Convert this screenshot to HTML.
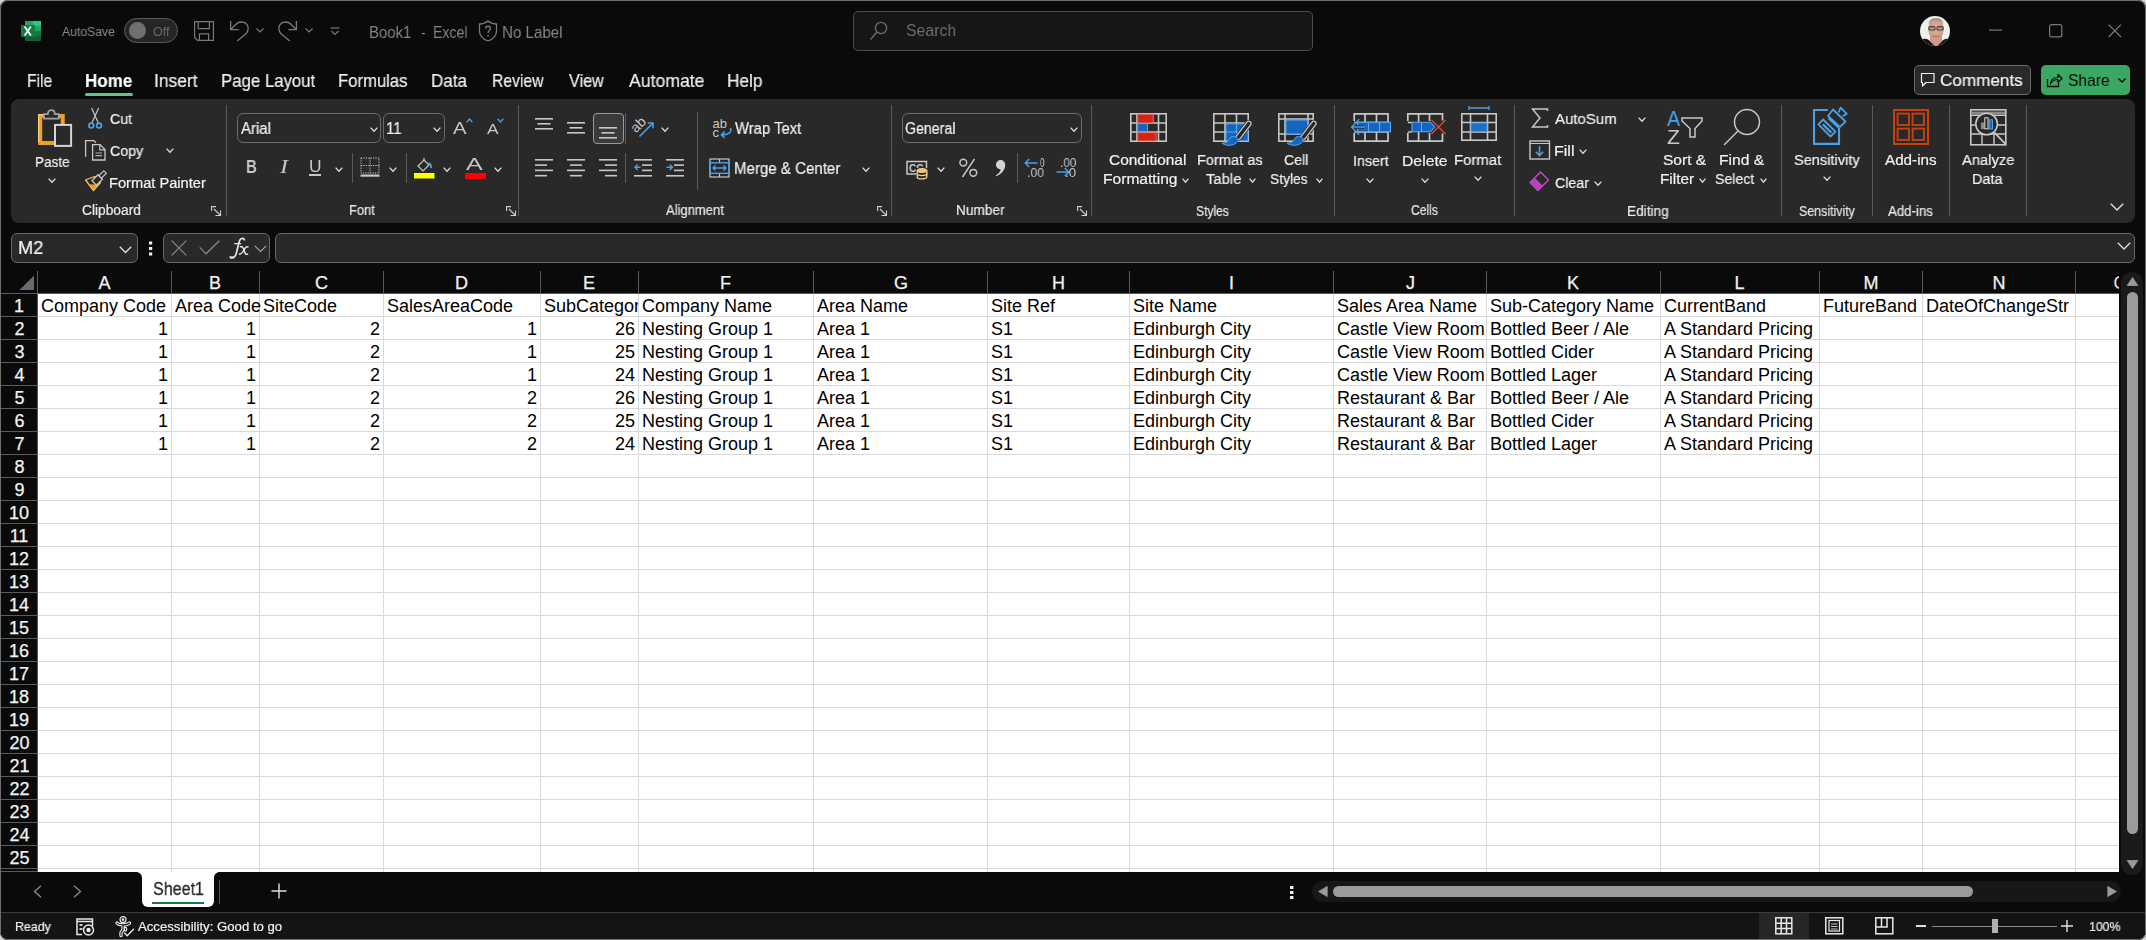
<!DOCTYPE html>
<html><head><meta charset="utf-8"><title>Book1 - Excel</title>
<style>
html,body{margin:0;padding:0;width:2146px;height:940px;overflow:hidden;background:#d6d6d6;}
.a{position:absolute;}
.t{position:absolute;line-height:1;white-space:pre;transform-origin:0 0;font-family:'Liberation Sans',sans-serif;}
svg.a{overflow:visible;}
.u{will-change:transform;}
</style></head><body>
<div class="a" style="left:0px;top:0px;width:2146px;height:940px;background:#0a0a0a;border-radius:8px;box-shadow:inset 0 0 0 1px #6f6f6f;"></div>
<svg class="a" style="left:21px;top:21px;" width="20" height="20" viewBox="0 0 20 20" fill="none">
<rect x="4" y="0" width="16" height="20" rx="1" fill="#185c37"/>
<rect x="4" y="0" width="16" height="5" fill="#21a366"/>
<rect x="12" y="0" width="8" height="5" fill="#33c481"/>
<rect x="4" y="5" width="16" height="5" fill="#21a366"/>
<rect x="4" y="10" width="16" height="5" fill="#107c41"/>
<rect x="0" y="4" width="14" height="12" rx="1" fill="#107c41"/>
<path d="M3.6 5.4 L9.9 14.6 M9.9 5.4 L3.6 14.6" stroke="#fff" stroke-width="1.7"/>
</svg>
<svg class="a" style="left:124px;top:18px;" width="54" height="25" viewBox="0 0 54 25" fill="none"><rect x="0.5" y="0.5" width="53" height="24" rx="12" fill="#262626" stroke="#5a5a5a"/><circle cx="13.5" cy="12.5" r="8.5" fill="#707070"/></svg>
<svg class="a" style="left:194px;top:21px;" width="20" height="20" viewBox="0 0 20 20" fill="none"><path d="M0.6 0.6 H19.4 V19.4 H3.6 L0.6 16.4 Z" stroke="#7a7a7a" stroke-width="1.2"/><path d="M4.2 0.6 V7.6 H15.4 V0.6" stroke="#7a7a7a" stroke-width="1.2"/><path d="M5.4 19.4 V12.8 H14.6 V19.4" stroke="#7a7a7a" stroke-width="1.2"/></svg>
<svg class="a" style="left:228px;top:20px;" width="22" height="22" viewBox="0 0 22 22" fill="none"><path d="M2.6 1 V9.6 H10.6" stroke="#7a7a7a" stroke-width="1.3" fill="none"/><path d="M3 9.2 L8 4.2 C11 1.2, 16.5 1.2, 19 4.6 C21 7.5, 20.3 11.5, 18 13.8 L9.2 21" stroke="#7a7a7a" stroke-width="1.3" fill="none"/></svg>
<svg class="a" style="left:256px;top:28px;" width="8" height="5" viewBox="0 0 8 5" fill="none"><path d="M0.5 0.5 L4 4 L7.5 0.5" stroke="#7a7a7a" stroke-width="1.2"/></svg>
<svg class="a" style="left:277px;top:20px;" width="22" height="22" viewBox="0 0 22 22" fill="none"><path d="M19.4 1 V9.6 H11.4" stroke="#7a7a7a" stroke-width="1.3" fill="none"/><path d="M19 9.2 L14 4.2 C11 1.2, 5.5 1.2, 3 4.6 C1 7.5, 1.7 11.5, 4 13.8 L12.8 21" stroke="#7a7a7a" stroke-width="1.3" fill="none"/></svg>
<svg class="a" style="left:305px;top:28px;" width="8" height="5" viewBox="0 0 8 5" fill="none"><path d="M0.5 0.5 L4 4 L7.5 0.5" stroke="#7a7a7a" stroke-width="1.2"/></svg>
<svg class="a" style="left:330px;top:27px;" width="10" height="10" viewBox="0 0 10 10" fill="none"><path d="M0.5 1 H9.5" stroke="#7a7a7a" stroke-width="1.2"/><path d="M1.5 4 L5 7.5 L8.5 4" stroke="#7a7a7a" stroke-width="1.2"/></svg>
<svg class="a" style="left:478px;top:20px;" width="20" height="22" viewBox="0 0 20 22" fill="none"><path d="M10 1 C13 3.5, 16 4, 18.5 4 V11 C18.5 16, 14 19.5, 10 21 C6 19.5, 1.5 16, 1.5 11 V4 C4 4, 7 3.5, 10 1 Z" stroke="#7a7a7a" stroke-width="1.3"/><path d="M7.5 8.5 C7.5 5.5, 12.5 5.5, 12.5 8.5 C12.5 10.5, 10 10.5, 10 13" stroke="#7a7a7a" stroke-width="1.3"/><circle cx="10" cy="15.8" r="0.9" fill="#7a7a7a"/></svg>
<div class="a" style="left:853px;top:11px;width:460px;height:40px;box-sizing:border-box;background:#161616;border:1px solid #4b4b4b;border-radius:5px;"></div>
<svg class="a" style="left:869px;top:21px;" width="20" height="20" viewBox="0 0 20 20" fill="none"><circle cx="12" cy="7" r="5.6" stroke="#6e6e6e" stroke-width="1.3"/><path d="M8 11 L1.5 18.5" stroke="#6e6e6e" stroke-width="1.3"/></svg>
<svg class="a" style="left:1920px;top:16px;" width="30" height="30" viewBox="0 0 30 30" fill="none"><defs><clipPath id="av"><circle cx="15" cy="15" r="15"/></clipPath><radialGradient id="fg" cx="0.5" cy="0.45" r="0.6"><stop offset="0" stop-color="#e2b09a"/><stop offset="1" stop-color="#c99682"/></radialGradient></defs>
<g clip-path="url(#av)"><rect width="30" height="30" fill="#eef1ea"/>
<path d="M10 18 H22 V30 H10 Z" fill="#cf9a86"/><ellipse cx="16" cy="13.5" rx="7.6" ry="10.5" fill="url(#fg)"/>
<path d="M8.6 9.5 C8.5 3.5, 12 2, 16 2 C20 2, 23.5 3.5, 23.4 9.5 C22 5.5, 19 4.6, 16 4.6 C13 4.6, 10 5.5, 8.6 9.5Z" fill="#a89a90"/>
<rect x="8.8" y="10.6" width="6.2" height="3.4" rx="1" stroke="#4a4040" stroke-width="1.1" fill="#8a7a78" fill-opacity="0.35"/><rect x="17" y="10.6" width="6.2" height="3.4" rx="1" stroke="#4a4040" stroke-width="1.1" fill="#8a7a78" fill-opacity="0.35"/>
<path d="M12.5 19.5 C14.5 20.8, 17.5 20.8, 19.5 19.5" stroke="#b86a6a" stroke-width="1.2"/>
<path d="M0 24 C4 22, 8 22, 10.5 26 L16 31 L21.5 26 C24 22, 28 22, 32 24 V32 H0 Z" fill="#141414"/></g></svg>
<svg class="a" style="left:1989px;top:29px;" width="13" height="2" viewBox="0 0 13 2" fill="none"><rect x="0" y="0.5" width="13" height="1.2" fill="#7a7a7a"/></svg>
<svg class="a" style="left:2049px;top:24px;" width="14" height="14" viewBox="0 0 14 14" fill="none"><rect x="0.6" y="0.6" width="12.2" height="12.2" rx="2" stroke="#7a7a7a" stroke-width="1.2"/></svg>
<svg class="a" style="left:2108px;top:24px;" width="14" height="14" viewBox="0 0 14 14" fill="none"><path d="M0.6 0.6 L13 13 M13 0.6 L0.6 13" stroke="#7a7a7a" stroke-width="1.2"/></svg>
<div class="a" style="left:85px;top:93px;width:48px;height:3px;background:#5fc38a;border-radius:2px;"></div>
<div class="a" style="left:1914px;top:65px;width:117px;height:30px;box-sizing:border-box;background:#292929;border:1px solid #6a6a6a;border-radius:5px;"></div>
<svg class="a" style="left:1920px;top:72px;" width="16" height="16" viewBox="0 0 16 16" fill="none"><path d="M1.5 1.5 H14 V10.5 H6 L2.5 14 V10.5 H1.5 Z" stroke="#f0f0f0" stroke-width="1.2" stroke-linejoin="round"/></svg>
<div class="a" style="left:2041px;top:65px;width:89px;height:30px;background:#3aa862;border-radius:5px;"></div>
<svg class="a" style="left:2046px;top:72px;" width="17" height="16" viewBox="0 0 17 16" fill="none"><path d="M1.5 7 V14.5 H12.5 V11" stroke="#0a0a0a" stroke-width="1.3"/><path d="M4.5 12 C5 7, 8 5.5, 12 5.5 V2.5 L16 6.5 L12 10.5 V7.5 C9 7.5, 6.5 8.5, 4.5 12Z" stroke="#0a0a0a" stroke-width="1.2" stroke-linejoin="round"/></svg>
<svg class="a" style="left:2118px;top:78px;" width="8" height="5" viewBox="0 0 8 5" fill="none"><path d="M0.5 0.5 L4 4 L7.5 0.5" stroke="#0a0a0a" stroke-width="1.3"/></svg>
<div class="a" style="left:11px;top:99px;width:2124px;height:124px;background:#292929;border-radius:8px;"></div>
<div class="a" style="left:226px;top:105px;width:1px;height:111px;background:#5a5a5a;"></div>
<div class="a" style="left:518px;top:105px;width:1px;height:111px;background:#5a5a5a;"></div>
<div class="a" style="left:891px;top:105px;width:1px;height:111px;background:#5a5a5a;"></div>
<div class="a" style="left:1091px;top:105px;width:1px;height:111px;background:#5a5a5a;"></div>
<div class="a" style="left:1334px;top:105px;width:1px;height:111px;background:#5a5a5a;"></div>
<div class="a" style="left:1514px;top:105px;width:1px;height:111px;background:#5a5a5a;"></div>
<div class="a" style="left:1781px;top:105px;width:1px;height:111px;background:#5a5a5a;"></div>
<div class="a" style="left:1872px;top:105px;width:1px;height:111px;background:#5a5a5a;"></div>
<div class="a" style="left:1949px;top:105px;width:1px;height:111px;background:#5a5a5a;"></div>
<div class="a" style="left:2026px;top:105px;width:1px;height:111px;background:#5a5a5a;"></div>
<svg class="a" style="left:37px;top:108px;" width="37" height="40" viewBox="0 0 37 40" fill="none">
<path d="M8 8 H3.2 V34.9 H17.5" stroke="#f0a024" stroke-width="4" fill="none"/>
<path d="M20 8 H25.7 V16" stroke="#f0a024" stroke-width="4" fill="none"/>
<path d="M1.6 34 V6.6 H7" stroke="#f6d283" stroke-width="1.2" fill="none"/>
<path d="M6.9 6.1 H10.8 C10.8 0.9, 17.8 0.9, 17.8 6.1 H21.7 V10.7 H6.9 Z" stroke="#a2a2a2" stroke-width="1.8" fill="#292929"/>
<rect x="18" y="16.9" width="16.1" height="21" stroke="#d4d4d4" stroke-width="2" fill="#292929"/>
</svg>
<svg class="a" style="left:48px;top:178px;" width="8" height="5" viewBox="0 0 8 5" fill="none"><path d="M0.6 0.6 L4.0 4.2 L7.4 0.6" stroke="#e0e0e0" stroke-width="1.3" fill="none"/></svg>
<svg class="a" style="left:86px;top:106px;" width="18" height="24" viewBox="0 0 18 24" fill="none"><path d="M5.6 2 L12.2 16.8 M12.6 2 L6 16.8" stroke="#c8c8c8" stroke-width="1.2"/>
<circle cx="5.3" cy="19.5" r="2.4" stroke="#4ba0e6" stroke-width="1.7"/><circle cx="13" cy="19.5" r="2.4" stroke="#4ba0e6" stroke-width="1.7"/></svg>
<svg class="a" style="left:84px;top:139px;" width="22" height="22" viewBox="0 0 22 22" fill="none"><path d="M1.6 17.8 V1.6 H9.8 L12 3.8" stroke="#c8c8c8" stroke-width="1.3" fill="none"/>
<path d="M8.6 5.6 H16 L21 10.6 V21 H8.6 Z" stroke="#c8c8c8" stroke-width="1.3" fill="#292929"/><path d="M15.8 5.6 V10.8 H21" stroke="#c8c8c8" stroke-width="1.2" fill="none"/><path d="M11.5 14 H18 M11.5 16.6 H18" stroke="#b0b0b0" stroke-width="1.2"/></svg>
<svg class="a" style="left:166px;top:148px;" width="8" height="5" viewBox="0 0 8 5" fill="none"><path d="M0.6 0.6 L4.0 4.2 L7.4 0.6" stroke="#e0e0e0" stroke-width="1.3" fill="none"/></svg>
<svg class="a" style="left:84px;top:170px;" width="22" height="22" viewBox="0 0 22 22" fill="none"><path d="M1.6 10 L10.5 6.5 L16.5 12.5 L9.5 20.5 Z" stroke="#f2c65a" stroke-width="1.3" stroke-linejoin="round" fill="none"/>
<path d="M5.5 14.2 L14 14.8 L9.5 19.8 Z" fill="#f0a024"/>
<g transform="rotate(-45 14 9)"><rect x="8.5" y="6" width="8.5" height="6.2" stroke="#c8c8c8" stroke-width="1.3" fill="#292929"/><rect x="17" y="7.3" width="7" height="3.6" stroke="#c8c8c8" stroke-width="1.2" fill="#292929"/></g></svg>
<svg class="a" style="left:211px;top:206px;" width="11" height="11" viewBox="0 0 11 11" fill="none"><path d="M0.6 5 V0.6 H5" stroke="#d0d0d0" stroke-width="1.1"/><path d="M3 3 L9.5 9.5 M9.5 4.5 V9.5 H4.5" stroke="#d0d0d0" stroke-width="1.1"/></svg>
<div class="a" style="left:237px;top:113px;width:144px;height:30px;box-sizing:border-box;border:1px solid #6a6a6a;border-radius:6px;"></div>
<svg class="a" style="left:370px;top:127px;" width="8" height="5" viewBox="0 0 8 5" fill="none"><path d="M0.6 0.6 L4.0 4.2 L7.4 0.6" stroke="#e0e0e0" stroke-width="1.3" fill="none"/></svg>
<div class="a" style="left:383px;top:113px;width:62px;height:30px;box-sizing:border-box;border:1px solid #6a6a6a;border-radius:6px;"></div>
<svg class="a" style="left:433px;top:127px;" width="8" height="5" viewBox="0 0 8 5" fill="none"><path d="M0.6 0.6 L4.0 4.2 L7.4 0.6" stroke="#e0e0e0" stroke-width="1.3" fill="none"/></svg>
<svg class="a" style="left:466px;top:118px;" width="7" height="5" viewBox="0 0 7 5" fill="none"><path d="M0.6 4.2 L3.5 1 L6.4 4.2" stroke="#4ba0e6" stroke-width="1.3"/></svg>
<svg class="a" style="left:497px;top:118px;" width="7" height="5" viewBox="0 0 7 5" fill="none"><path d="M0.6 0.8 L3.5 4 L6.4 0.8" stroke="#4ba0e6" stroke-width="1.3"/></svg>
<div class="a" style="left:309px;top:174px;width:12px;height:1.5px;background:#c8c8c8;"></div>
<svg class="a" style="left:335px;top:167px;" width="8" height="5" viewBox="0 0 8 5" fill="none"><path d="M0.6 0.6 L4.0 4.2 L7.4 0.6" stroke="#e0e0e0" stroke-width="1.3" fill="none"/></svg>
<div class="a" style="left:352px;top:153px;width:1px;height:30px;background:#5a5a5a;"></div>
<svg class="a" style="left:360px;top:157px;" width="20" height="21" viewBox="0 0 20 21" fill="none"><rect x="1" y="1" width="18" height="15" stroke="#c8c8c8" stroke-width="1" stroke-dasharray="1.2 1.2"/>
<path d="M10 1 V16 M1 8.5 H19" stroke="#c8c8c8" stroke-width="1" stroke-dasharray="1.2 1.2"/><rect x="0.5" y="17.5" width="19" height="2.2" fill="#c8c8c8"/></svg>
<svg class="a" style="left:389px;top:167px;" width="8" height="5" viewBox="0 0 8 5" fill="none"><path d="M0.6 0.6 L4.0 4.2 L7.4 0.6" stroke="#e0e0e0" stroke-width="1.3" fill="none"/></svg>
<div class="a" style="left:406px;top:153px;width:1px;height:30px;background:#5a5a5a;"></div>
<svg class="a" style="left:414px;top:157px;" width="21" height="22" viewBox="0 0 21 22" fill="none"><path d="M4 9 L10 3 L15 8 L9 14 Z" stroke="#c8c8c8" stroke-width="1.2"/><path d="M10 3 V0.8" stroke="#c8c8c8" stroke-width="1.2"/><path d="M14.5 6 C16.5 7, 17.5 9, 17 11" stroke="#4ba0e6" stroke-width="1.8"/>
<rect x="0" y="16" width="20.5" height="5.5" fill="#ffff00"/></svg>
<svg class="a" style="left:443px;top:167px;" width="8" height="5" viewBox="0 0 8 5" fill="none"><path d="M0.6 0.6 L4.0 4.2 L7.4 0.6" stroke="#e0e0e0" stroke-width="1.3" fill="none"/></svg>
<div class="a" style="left:465px;top:173px;width:20.5px;height:5.5px;background:#ff0000;"></div>
<svg class="a" style="left:494px;top:167px;" width="8" height="5" viewBox="0 0 8 5" fill="none"><path d="M0.6 0.6 L4.0 4.2 L7.4 0.6" stroke="#e0e0e0" stroke-width="1.3" fill="none"/></svg>
<svg class="a" style="left:506px;top:206px;" width="11" height="11" viewBox="0 0 11 11" fill="none"><path d="M0.6 5 V0.6 H5" stroke="#d0d0d0" stroke-width="1.1"/><path d="M3 3 L9.5 9.5 M9.5 4.5 V9.5 H4.5" stroke="#d0d0d0" stroke-width="1.1"/></svg>
<svg class="a" style="left:535px;top:118px;" width="20" height="17" viewBox="0 0 20 17" fill="none"><rect x="0" y="0" width="18" height="1.6" fill="#c8c8c8"/><rect x="2.5" y="5" width="13" height="1.6" fill="#c8c8c8"/><rect x="0" y="10" width="18" height="1.6" fill="#c8c8c8"/></svg>
<svg class="a" style="left:567px;top:121.5px;" width="20" height="17" viewBox="0 0 20 17" fill="none"><rect x="0" y="0" width="18" height="1.6" fill="#c8c8c8"/><rect x="2.5" y="5" width="13" height="1.6" fill="#c8c8c8"/><rect x="0" y="10" width="18" height="1.6" fill="#c8c8c8"/></svg>
<div class="a" style="left:593px;top:113px;width:31px;height:31px;box-sizing:border-box;background:#3a3a3a;border:1px solid #9a9a9a;border-radius:4px;"></div>
<svg class="a" style="left:599px;top:126.5px;" width="20" height="17" viewBox="0 0 20 17" fill="none"><rect x="0" y="0" width="18" height="1.6" fill="#c8c8c8"/><rect x="2.5" y="5" width="13" height="1.6" fill="#c8c8c8"/><rect x="0" y="10" width="18" height="1.6" fill="#c8c8c8"/></svg>
<div class="a" style="left:625px;top:113px;width:1px;height:31px;background:#5a5a5a;"></div>
<svg class="a" style="left:628px;top:110px;" width="30" height="30" viewBox="0 0 30 30" fill="none"><text x="8" y="23.5" transform="rotate(-45 8 23.5)" font-family="Liberation Sans" font-size="14" fill="#c8c8c8">ab</text>
<path d="M11.5 26.5 L25 13 M19.8 13 H25 V18.2" stroke="#4ba0e6" stroke-width="1.6"/></svg>
<svg class="a" style="left:661px;top:127px;" width="8" height="5" viewBox="0 0 8 5" fill="none"><path d="M0.6 0.6 L4.0 4.2 L7.4 0.6" stroke="#e0e0e0" stroke-width="1.3" fill="none"/></svg>
<svg class="a" style="left:535px;top:159px;" width="20" height="23.2" viewBox="0 0 20 23.2" fill="none"><rect x="0" y="0.0" width="18" height="1.6" fill="#c8c8c8"/><rect x="0" y="5.3" width="12" height="1.6" fill="#c8c8c8"/><rect x="0" y="10.6" width="18" height="1.6" fill="#c8c8c8"/><rect x="0" y="15.899999999999999" width="12" height="1.6" fill="#c8c8c8"/></svg>
<svg class="a" style="left:567px;top:159px;" width="20" height="23.2" viewBox="0 0 20 23.2" fill="none"><rect x="0" y="0.0" width="18" height="1.6" fill="#c8c8c8"/><rect x="3" y="5.3" width="12" height="1.6" fill="#c8c8c8"/><rect x="0" y="10.6" width="18" height="1.6" fill="#c8c8c8"/><rect x="3" y="15.899999999999999" width="12" height="1.6" fill="#c8c8c8"/></svg>
<svg class="a" style="left:599px;top:159px;" width="20" height="23.2" viewBox="0 0 20 23.2" fill="none"><rect x="0" y="0.0" width="18" height="1.6" fill="#c8c8c8"/><rect x="6" y="5.3" width="12" height="1.6" fill="#c8c8c8"/><rect x="0" y="10.6" width="18" height="1.6" fill="#c8c8c8"/><rect x="6" y="15.899999999999999" width="12" height="1.6" fill="#c8c8c8"/></svg>
<div class="a" style="left:625px;top:153px;width:1px;height:30px;background:#5a5a5a;"></div>
<svg class="a" style="left:634px;top:158px;" width="19" height="19" viewBox="0 0 19 19" fill="none"><rect x="0" y="1" width="18" height="1.6" fill="#c8c8c8"/><rect x="8" y="6.3" width="10" height="1.6" fill="#c8c8c8"/><rect x="8" y="11.6" width="10" height="1.6" fill="#c8c8c8"/><rect x="0" y="17" width="18" height="1.6" fill="#c8c8c8"/>
<path d="M6.5 9.2 H1 M3.8 6.5 L1 9.2 L3.8 12" stroke="#4ba0e6" stroke-width="1.4"/></svg>
<svg class="a" style="left:666px;top:158px;" width="19" height="19" viewBox="0 0 19 19" fill="none"><rect x="0" y="1" width="18" height="1.6" fill="#c8c8c8"/><rect x="8" y="6.3" width="10" height="1.6" fill="#c8c8c8"/><rect x="8" y="11.6" width="10" height="1.6" fill="#c8c8c8"/><rect x="0" y="17" width="18" height="1.6" fill="#c8c8c8"/>
<path d="M0.5 9.2 H6.5 M3.8 6.5 L6.5 9.2 L3.8 12" stroke="#4ba0e6" stroke-width="1.4"/></svg>
<div class="a" style="left:697px;top:112px;width:1px;height:78px;background:#5a5a5a;"></div>
<svg class="a" style="left:711px;top:116px;" width="24" height="24" viewBox="0 0 24 24" fill="none"><text x="1.5" y="12" font-family="Liberation Sans" font-size="13" fill="#c8c8c8">ab</text><text x="1.5" y="21" font-family="Liberation Sans" font-size="13" fill="#c8c8c8">c</text>
<path d="M19.5 12 C21 16.5, 17.5 18.8, 10.5 18.8 M13.6 15.6 L10.4 18.8 L13.6 22" stroke="#4ba0e6" stroke-width="1.6"/></svg>
<svg class="a" style="left:709px;top:158px;" width="21" height="20" viewBox="0 0 21 20" fill="none"><rect x="1" y="1" width="19" height="18" stroke="#c8c8c8" stroke-width="1.2"/><path d="M10.5 1 V4.5 M10.5 15.5 V19" stroke="#c8c8c8" stroke-width="1.2"/>
<rect x="1" y="4.8" width="19" height="10.5" stroke="#4ba0e6" stroke-width="1.4"/><path d="M4 10 H17 M6.5 7.5 L4 10 L6.5 12.5 M14.5 7.5 L17 10 L14.5 12.5" stroke="#4ba0e6" stroke-width="1.3"/></svg>
<svg class="a" style="left:862px;top:167px;" width="8" height="5" viewBox="0 0 8 5" fill="none"><path d="M0.6 0.6 L4.0 4.2 L7.4 0.6" stroke="#e0e0e0" stroke-width="1.3" fill="none"/></svg>
<svg class="a" style="left:877px;top:206px;" width="11" height="11" viewBox="0 0 11 11" fill="none"><path d="M0.6 5 V0.6 H5" stroke="#d0d0d0" stroke-width="1.1"/><path d="M3 3 L9.5 9.5 M9.5 4.5 V9.5 H4.5" stroke="#d0d0d0" stroke-width="1.1"/></svg>
<div class="a" style="left:902px;top:113px;width:180px;height:30px;box-sizing:border-box;border:1px solid #6a6a6a;border-radius:6px;"></div>
<svg class="a" style="left:1070px;top:127px;" width="8" height="5" viewBox="0 0 8 5" fill="none"><path d="M0.6 0.6 L4.0 4.2 L7.4 0.6" stroke="#e0e0e0" stroke-width="1.3" fill="none"/></svg>
<svg class="a" style="left:906px;top:160px;" width="23" height="20" viewBox="0 0 23 20" fill="none"><rect x="1" y="1.5" width="19.5" height="12.5" stroke="#c8c8c8" stroke-width="1.5"/><text x="3" y="11.5" font-family="Liberation Sans" font-size="10" font-weight="bold" fill="#c8c8c8">CC</text>
<rect x="10" y="8" width="11.5" height="11.5" fill="#292929"/>
<ellipse cx="16" cy="10.5" rx="4.8" ry="2" fill="#f2c46a" stroke="#f0d58a" stroke-width="1"/><path d="M11.2 10.5 V17 C11.2 19.6, 20.8 19.6, 20.8 17 V10.5" stroke="#f0d58a" stroke-width="1.3" fill="none"/><path d="M11.2 13.8 C11.2 16.2, 20.8 16.2, 20.8 13.8" stroke="#f0d58a" stroke-width="1.3"/></svg>
<svg class="a" style="left:937px;top:167px;" width="8" height="5" viewBox="0 0 8 5" fill="none"><path d="M0.6 0.6 L4.0 4.2 L7.4 0.6" stroke="#e0e0e0" stroke-width="1.3" fill="none"/></svg>
<svg class="a" style="left:959px;top:158px;" width="19" height="20" viewBox="0 0 19 20" fill="none"><circle cx="4.3" cy="4.6" r="3.4" stroke="#c8c8c8" stroke-width="1.5"/><circle cx="14.3" cy="14.8" r="3.4" stroke="#c8c8c8" stroke-width="1.5"/><path d="M15.5 0.8 L3.5 19" stroke="#c8c8c8" stroke-width="1.5"/></svg>
<svg class="a" style="left:995px;top:159px;" width="12" height="18" viewBox="0 0 12 18" fill="none"><path d="M5.6 1 A4.6 4.6 0 0 1 10.2 5.8 C10.2 11, 6.5 15.2, 1.4 17.2 L0.8 16.2 C3.8 14.4, 5.4 12.3, 5.7 10.4 A4.7 4.7 0 0 1 5.6 1 Z" fill="#d4d4d4"/></svg>
<div class="a" style="left:1017px;top:153px;width:1px;height:30px;background:#5a5a5a;"></div>
<svg class="a" style="left:1024px;top:158px;" width="14" height="10" viewBox="0 0 14 10" fill="none"><path d="M13.5 5 H1.5 M5.2 1 L1.2 5 L5.2 9" stroke="#4ba0e6" stroke-width="1.5"/></svg>
<svg class="a" style="left:1056px;top:167px;" width="14" height="10" viewBox="0 0 14 10" fill="none"><path d="M0.5 5 H12.5 M8.8 1 L12.8 5 L8.8 9" stroke="#4ba0e6" stroke-width="1.5"/></svg>
<svg class="a" style="left:1077px;top:206px;" width="11" height="11" viewBox="0 0 11 11" fill="none"><path d="M0.6 5 V0.6 H5" stroke="#d0d0d0" stroke-width="1.1"/><path d="M3 3 L9.5 9.5 M9.5 4.5 V9.5 H4.5" stroke="#d0d0d0" stroke-width="1.1"/></svg>
<svg class="a" style="left:1130px;top:113px;" width="37" height="29" viewBox="0 0 37 29" fill="none"><rect x="0.8" y="0.8" width="35.4" height="27.4" stroke="#c8c8c8" stroke-width="1.6"/><path d="M7 0 V29" stroke="#c8c8c8" stroke-width="1.6"/><path d="M28.5 0 V29" stroke="#c8c8c8" stroke-width="1.6"/><path d="M0 10 H37" stroke="#c8c8c8" stroke-width="1.6"/><path d="M0 19 H37" stroke="#c8c8c8" stroke-width="1.6"/>
<rect x="7.6" y="1.2" width="15.6" height="8.8" fill="#d42412" stroke="#f07272" stroke-width="1"/><rect x="7.6" y="10.6" width="10" height="8" fill="#1565c0" stroke="#5aaaf0" stroke-width="1"/><rect x="7.6" y="19.6" width="18.5" height="8.4" fill="#d42412" stroke="#f07272" stroke-width="1"/></svg>
<svg class="a" style="left:1182px;top:178px;" width="7" height="5" viewBox="0 0 7 5" fill="none"><path d="M0.6 0.6 L3.5 4.2 L6.4 0.6" stroke="#e0e0e0" stroke-width="1.3" fill="none"/></svg>
<svg class="a" style="left:1213px;top:113px;" width="39" height="35" viewBox="0 0 39 35" fill="none"><rect x="0.8" y="0.8" width="34.4" height="27.4" stroke="#c8c8c8" stroke-width="1.6"/><path d="M12 0 V29" stroke="#c8c8c8" stroke-width="1.6"/><path d="M23.5 0 V29" stroke="#c8c8c8" stroke-width="1.6"/><path d="M0 10 H36" stroke="#c8c8c8" stroke-width="1.6"/><path d="M0 19 H36" stroke="#c8c8c8" stroke-width="1.6"/>
<rect x="13" y="10.8" width="22" height="17" fill="#1565c0" stroke="#5aaaf0" stroke-width="1"/><path d="M13 19 H35 M23.5 10.8 V28" stroke="#5aaaf0" stroke-width="1.2"/>
<g transform="translate(23.5 26.5) rotate(-52.4)"><rect x="0" y="-2.3" width="22.5" height="4.6" rx="2.3" stroke="#292929" stroke-width="2.5" fill="#292929"/><rect x="0" y="-2.3" width="22.5" height="4.6" rx="2.3" stroke="#c8c8c8" stroke-width="1.3" fill="#292929"/></g>
<path d="M24.8 25.5 C22.5 22.5, 18 22.8, 16.5 26 C15.3 28.6, 13 30.2, 9.2 30.2 C11.8 32.6, 18.5 33, 22 30.8 C24.6 29.2, 25.8 27.5, 24.8 25.5 Z" fill="#1565c0" stroke="#5aaaf0" stroke-width="1"/></svg>
<svg class="a" style="left:1249px;top:178px;" width="7" height="5" viewBox="0 0 7 5" fill="none"><path d="M0.6 0.6 L3.5 4.2 L6.4 0.6" stroke="#e0e0e0" stroke-width="1.3" fill="none"/></svg>
<svg class="a" style="left:1278px;top:113px;" width="39" height="35" viewBox="0 0 39 35" fill="none"><rect x="0.8" y="0.8" width="34.4" height="27.4" stroke="#c8c8c8" stroke-width="1.6"/><path d="M7 0 V29" stroke="#c8c8c8" stroke-width="1.6"/><path d="M30 0 V29" stroke="#c8c8c8" stroke-width="1.6"/><path d="M0 6 H36" stroke="#c8c8c8" stroke-width="1.6"/><path d="M0 21 H36" stroke="#c8c8c8" stroke-width="1.6"/>
<rect x="8" y="7" width="21.5" height="14" fill="#1565c0" stroke="#5aaaf0" stroke-width="1"/>
<g transform="translate(23.5 26.5) rotate(-52.4)"><rect x="0" y="-2.3" width="22.5" height="4.6" rx="2.3" stroke="#292929" stroke-width="2.5" fill="#292929"/><rect x="0" y="-2.3" width="22.5" height="4.6" rx="2.3" stroke="#c8c8c8" stroke-width="1.3" fill="#292929"/></g>
<path d="M24.8 25.5 C22.5 22.5, 18 22.8, 16.5 26 C15.3 28.6, 13 30.2, 9.2 30.2 C11.8 32.6, 18.5 33, 22 30.8 C24.6 29.2, 25.8 27.5, 24.8 25.5 Z" fill="#1565c0" stroke="#5aaaf0" stroke-width="1"/></svg>
<svg class="a" style="left:1316px;top:178px;" width="7" height="5" viewBox="0 0 7 5" fill="none"><path d="M0.6 0.6 L3.5 4.2 L6.4 0.6" stroke="#e0e0e0" stroke-width="1.3" fill="none"/></svg>
<svg class="a" style="left:1350px;top:112px;" width="44" height="31" viewBox="0 0 44 31" fill="none"><g stroke="#c8c8c8" stroke-width="1.7" fill="none">
<path d="M4.2 9 V1.8 H38 V29.2 H4.2 V21"/><path d="M15 1.8 V29.2 M26.5 1.8 V29.2 M4.2 10.5 H38 M4.2 20 H38"/></g>
<rect x="7.5" y="10.2" width="33" height="9.6" fill="#1565c0" stroke="#5aaaf0" stroke-width="1.1"/><path d="M18.5 10.2 V19.8 M29.5 10.2 V19.8" stroke="#5aaaf0" stroke-width="1.1"/>
<path d="M14.5 13.6 H5 M14.5 16.4 H5" stroke="#4ba0e6" stroke-width="1"/><rect x="5" y="13.2" width="9.5" height="3.6" fill="#292929"/><path d="M15 15 H2.5 M9.2 7.2 L1.6 15 L9.2 22.8" stroke="#4ba0e6" stroke-width="1.4"/></svg>
<svg class="a" style="left:1366px;top:178px;" width="8" height="5" viewBox="0 0 8 5" fill="none"><path d="M0.6 0.6 L4.0 4.2 L7.4 0.6" stroke="#e0e0e0" stroke-width="1.3" fill="none"/></svg>
<svg class="a" style="left:1406px;top:112px;" width="42" height="31" viewBox="0 0 42 31" fill="none"><g stroke="#c8c8c8" stroke-width="1.7" fill="none">
<path d="M1.8 9 V1.8 H36.5 V8.5 M36.5 21.5 V29.2 H1.8 V21"/><path d="M12.6 1.8 V29.2 M23.5 1.8 V9 M23.5 21 V29.2 M1.8 10.5 H6 M1.8 20 H6"/></g>
<path d="M6 10.2 H24.5 L28.8 15 L24.5 19.8 H6 Z" fill="#1565c0" stroke="#5aaaf0" stroke-width="1.1"/><path d="M15.5 10.2 V19.8" stroke="#5aaaf0" stroke-width="1.1"/>
<path d="M25.5 8 L39.5 22 M39.5 8 L25.5 22" stroke="#e0443a" stroke-width="1.5"/></svg>
<svg class="a" style="left:1421px;top:178px;" width="8" height="5" viewBox="0 0 8 5" fill="none"><path d="M0.6 0.6 L4.0 4.2 L7.4 0.6" stroke="#e0e0e0" stroke-width="1.3" fill="none"/></svg>
<svg class="a" style="left:1461px;top:106px;" width="37" height="36" viewBox="0 0 37 36" fill="none"><path d="M8 2 H28 M8 0 V4 M28 0 V4" stroke="#4ba0e6" stroke-width="1.3"/><g transform="translate(0 7)"><rect x="0.8" y="0.8" width="34.4" height="26.4" stroke="#c8c8c8" stroke-width="1.6"/><path d="M9.5 0 V28" stroke="#c8c8c8" stroke-width="1.6"/><path d="M26.5 0 V28" stroke="#c8c8c8" stroke-width="1.6"/><path d="M0 9.5 H36" stroke="#c8c8c8" stroke-width="1.6"/><path d="M0 19 H36" stroke="#c8c8c8" stroke-width="1.6"/><rect x="10" y="10" width="16" height="8.5" fill="#1f6fc5" stroke="#4ba0e6" stroke-width="1"/></g></svg>
<svg class="a" style="left:1474px;top:176px;" width="8" height="5" viewBox="0 0 8 5" fill="none"><path d="M0.6 0.6 L4.0 4.2 L7.4 0.6" stroke="#e0e0e0" stroke-width="1.3" fill="none"/></svg>
<svg class="a" style="left:1531px;top:108px;" width="18" height="20" viewBox="0 0 18 20" fill="none"><path d="M16.5 3 V1 H1.5 L9 10 L1.5 19 H16.5 V17" stroke="#c8c8c8" stroke-width="1.5" stroke-linejoin="miter"/></svg>
<svg class="a" style="left:1638px;top:117px;" width="8" height="5" viewBox="0 0 8 5" fill="none"><path d="M0.6 0.6 L4.0 4.2 L7.4 0.6" stroke="#e0e0e0" stroke-width="1.3" fill="none"/></svg>
<svg class="a" style="left:1529px;top:140px;" width="22" height="20" viewBox="0 0 22 20" fill="none"><rect x="1" y="1" width="19.5" height="18" stroke="#c8c8c8" stroke-width="1.4"/><path d="M1 3.5 H20.5" stroke="#c8c8c8" stroke-width="1"/><path d="M10.5 6 V15.5 M6.8 11.8 L10.5 15.5 L14.2 11.8" stroke="#4ba0e6" stroke-width="1.6"/></svg>
<svg class="a" style="left:1579px;top:149px;" width="8" height="5" viewBox="0 0 8 5" fill="none"><path d="M0.6 0.6 L4.0 4.2 L7.4 0.6" stroke="#e0e0e0" stroke-width="1.3" fill="none"/></svg>
<svg class="a" style="left:1529px;top:171px;" width="22" height="22" viewBox="0 0 22 22" fill="none"><path d="M1 11.5 L11.5 1 L19.5 9 L9 19.5 Z" stroke="#c050c8" stroke-width="1.3"/><path d="M1.5 11.5 L6 7 L13.5 14.5 L9 19 Z" fill="#b844b8"/></svg>
<svg class="a" style="left:1594px;top:181px;" width="8" height="5" viewBox="0 0 8 5" fill="none"><path d="M0.6 0.6 L4.0 4.2 L7.4 0.6" stroke="#e0e0e0" stroke-width="1.3" fill="none"/></svg>
<svg class="a" style="left:1681px;top:116px;" width="24" height="22" viewBox="0 0 24 22" fill="none"><path d="M1 2 H21 V5 L14 12.5 V21 H9 V12.5 L1 5 Z" stroke="#c8c8c8" stroke-width="1.5"/></svg>
<svg class="a" style="left:1699px;top:178px;" width="7" height="5" viewBox="0 0 7 5" fill="none"><path d="M0.6 0.6 L3.5 4.2 L6.4 0.6" stroke="#e0e0e0" stroke-width="1.3" fill="none"/></svg>
<svg class="a" style="left:1722px;top:108px;" width="40" height="40" viewBox="0 0 40 40" fill="none"><circle cx="25" cy="14" r="12.5" stroke="#c8c8c8" stroke-width="1.5"/><path d="M16 23 L2 37" stroke="#c8c8c8" stroke-width="1.5"/></svg>
<svg class="a" style="left:1760px;top:178px;" width="7" height="5" viewBox="0 0 7 5" fill="none"><path d="M0.6 0.6 L3.5 4.2 L6.4 0.6" stroke="#e0e0e0" stroke-width="1.3" fill="none"/></svg>
<svg class="a" style="left:1805px;top:102px;" width="48" height="48" viewBox="0 0 48 48" fill="none"><path d="M22.8 8 H9 V41.9 H34 V26" stroke="#4ba0e6" stroke-width="2.1" fill="none"/>
<path d="M13.4 22.4 L18.2 17.5 L30.4 29.6 L25.5 34.5 Z" stroke="#4ba0e6" stroke-width="1.8" stroke-linejoin="round"/>
<path d="M17.8 22.3 L26.3 30.6" stroke="#4ba0e6" stroke-width="2.2"/>
<path d="M23 14 L28 7.5 L40.5 19.5 L35 24.8 Z" stroke="#4ba0e6" stroke-width="1.8" stroke-linejoin="round"/>
<path d="M23.8 15.8 L34 25.5" stroke="#4ba0e6" stroke-width="3"/>
<path d="M33.5 10.5 L35.6 5.6 L41.8 11.8 L37.6 14.2" stroke="#4ba0e6" stroke-width="1.8" stroke-linejoin="round"/></svg>
<svg class="a" style="left:1823px;top:176px;" width="8" height="5" viewBox="0 0 8 5" fill="none"><path d="M0.6 0.6 L4.0 4.2 L7.4 0.6" stroke="#e0e0e0" stroke-width="1.3" fill="none"/></svg>
<svg class="a" style="left:1893px;top:109px;" width="37" height="37" viewBox="0 0 37 37" fill="none"><rect x="1" y="1" width="34" height="34" stroke="#c8400e" stroke-width="2"/><rect x="4.6" y="4.6" width="11.4" height="11.4" stroke="#c8400e" stroke-width="1.9"/><rect x="19.6" y="4.6" width="11.4" height="11.4" stroke="#c8400e" stroke-width="1.9"/><rect x="4.6" y="19.6" width="11.4" height="11.4" stroke="#c8400e" stroke-width="1.9"/><rect x="19.6" y="19.6" width="11.4" height="11.4" stroke="#c8400e" stroke-width="1.9"/></svg>
<svg class="a" style="left:1970px;top:109px;" width="37" height="37" viewBox="0 0 37 37" fill="none"><rect x="0.8" y="0.8" width="35" height="35" stroke="#c8c8c8" stroke-width="1.6"/><rect x="1.6" y="2.6" width="33.4" height="3" fill="#8a8a8a"/>
<path d="M0.8 6.4 H36 M0.8 16 H36 M0.8 25 H36 M12 25 V36 M24 25 V36" stroke="#c8c8c8" stroke-width="1.4"/>
<circle cx="16.6" cy="15" r="10.8" stroke="#c8c8c8" stroke-width="1.6" fill="#292929"/><path d="M24.2 23.4 L35.4 34.8" stroke="#c8c8c8" stroke-width="1.8"/>
<rect x="11" y="13.5" width="3" height="6.5" fill="#8a8a8a"/><rect x="14.8" y="8.8" width="3.2" height="11" stroke="#e0e0e0" stroke-width="1"/><rect x="19.2" y="10.8" width="3.3" height="9.2" fill="#1565c0" stroke="#5aaaf0" stroke-width="0.9"/></svg>
<svg class="a" style="left:2110px;top:203px;" width="14" height="8" viewBox="0 0 14 8" fill="none"><path d="M0.8 0.8 L7 7 L13.2 0.8" stroke="#e0e0e0" stroke-width="1.4"/></svg>
<div class="a" style="left:11px;top:233px;width:127px;height:30px;box-sizing:border-box;background:#292929;border:1px solid #686868;border-radius:6px;"></div>
<svg class="a" style="left:119px;top:246px;" width="13" height="8" viewBox="0 0 13 8" fill="none"><path d="M0.8 0.8 L6.5 6.5 L12.2 0.8" stroke="#e0e0e0" stroke-width="1.3"/></svg>
<svg class="a" style="left:149px;top:241px;" width="4" height="15" viewBox="0 0 4 15" fill="none"><rect x="0" y="0.5" width="3.2" height="3" fill="#f0f0f0"/><rect x="0" y="6" width="3.2" height="3" fill="#f0f0f0"/><rect x="0" y="11.5" width="3.2" height="3" fill="#f0f0f0"/></svg>
<div class="a" style="left:163px;top:233px;width:107px;height:30px;box-sizing:border-box;background:#292929;border:1px solid #686868;border-radius:6px;"></div>
<svg class="a" style="left:171px;top:240px;" width="16" height="16" viewBox="0 0 16 16" fill="none"><path d="M0.7 0.7 L15.3 15.3 M15.3 0.7 L0.7 15.3" stroke="#8a8a8a" stroke-width="1.2"/></svg>
<svg class="a" style="left:199px;top:240px;" width="21" height="15" viewBox="0 0 21 15" fill="none"><path d="M0.7 7.3 L7 13.8 L20.3 0.7" stroke="#8a8a8a" stroke-width="1.2"/></svg>
<svg class="a" style="left:225px;top:234px;" width="26" height="28" viewBox="0 0 26 28" fill="none"><g stroke="#e6e6e6" fill="none" stroke-linecap="round">
<path d="M19.4 5.8 C18.8 4, 16.6 3.8, 15.2 5.6 C13.8 7.5, 12.6 14.5, 11.4 19 C10.2 23.2, 8.2 24.6, 5.6 23.2" stroke-width="1.7"/>
<path d="M5.2 23 C5.4 24.4, 7.4 24.4, 7.2 23" stroke-width="1.6"/>
<path d="M9.8 9.6 H15.6" stroke-width="1.4"/>
<path d="M15.4 12.8 C17 12.2, 18 13, 19 16 C20 19.6, 20.8 20.9, 22.6 20.1" stroke-width="1.5"/>
<path d="M22.9 12.9 C21.5 12.4, 20.3 13.5, 18.6 16.5 C17 19.2, 16 20.6, 14.4 20.1" stroke-width="1.5"/></g></svg>
<svg class="a" style="left:254px;top:245px;" width="13" height="8" viewBox="0 0 13 8" fill="none"><path d="M0.8 0.8 L6.5 6.5 L12.2 0.8" stroke="#a8a8a8" stroke-width="1.1"/></svg>
<div class="a" style="left:275px;top:233px;width:1860px;height:30px;box-sizing:border-box;background:#292929;border:1px solid #686868;border-radius:6px;"></div>
<svg class="a" style="left:2117px;top:242px;" width="14" height="8" viewBox="0 0 14 8" fill="none"><path d="M0.8 0.8 L7 7 L13.2 0.8" stroke="#e0e0e0" stroke-width="1.3"/></svg>
<div class="a" style="left:38px;top:294px;width:2081px;height:578px;background:#ffffff;"></div>
<div class="a" style="left:1px;top:293px;width:2118px;height:1px;background:#5a5a5a;"></div>
<div class="a" style="left:37px;top:271px;width:1px;height:601px;background:#5a5a5a;"></div>
<div class="a" style="left:171px;top:271px;width:1px;height:22px;background:#5a5a5a;"></div>
<div class="a" style="left:171px;top:294px;width:1px;height:578px;background:#d9d9d9;"></div>
<div class="a" style="left:259px;top:271px;width:1px;height:22px;background:#5a5a5a;"></div>
<div class="a" style="left:259px;top:294px;width:1px;height:578px;background:#d9d9d9;"></div>
<div class="a" style="left:383px;top:271px;width:1px;height:22px;background:#5a5a5a;"></div>
<div class="a" style="left:383px;top:294px;width:1px;height:578px;background:#d9d9d9;"></div>
<div class="a" style="left:540px;top:271px;width:1px;height:22px;background:#5a5a5a;"></div>
<div class="a" style="left:540px;top:294px;width:1px;height:578px;background:#d9d9d9;"></div>
<div class="a" style="left:638px;top:271px;width:1px;height:22px;background:#5a5a5a;"></div>
<div class="a" style="left:638px;top:294px;width:1px;height:578px;background:#d9d9d9;"></div>
<div class="a" style="left:813px;top:271px;width:1px;height:22px;background:#5a5a5a;"></div>
<div class="a" style="left:813px;top:294px;width:1px;height:578px;background:#d9d9d9;"></div>
<div class="a" style="left:987px;top:271px;width:1px;height:22px;background:#5a5a5a;"></div>
<div class="a" style="left:987px;top:294px;width:1px;height:578px;background:#d9d9d9;"></div>
<div class="a" style="left:1129px;top:271px;width:1px;height:22px;background:#5a5a5a;"></div>
<div class="a" style="left:1129px;top:294px;width:1px;height:578px;background:#d9d9d9;"></div>
<div class="a" style="left:1333px;top:271px;width:1px;height:22px;background:#5a5a5a;"></div>
<div class="a" style="left:1333px;top:294px;width:1px;height:578px;background:#d9d9d9;"></div>
<div class="a" style="left:1486px;top:271px;width:1px;height:22px;background:#5a5a5a;"></div>
<div class="a" style="left:1486px;top:294px;width:1px;height:578px;background:#d9d9d9;"></div>
<div class="a" style="left:1660px;top:271px;width:1px;height:22px;background:#5a5a5a;"></div>
<div class="a" style="left:1660px;top:294px;width:1px;height:578px;background:#d9d9d9;"></div>
<div class="a" style="left:1819px;top:271px;width:1px;height:22px;background:#5a5a5a;"></div>
<div class="a" style="left:1819px;top:294px;width:1px;height:578px;background:#d9d9d9;"></div>
<div class="a" style="left:1922px;top:271px;width:1px;height:22px;background:#5a5a5a;"></div>
<div class="a" style="left:1922px;top:294px;width:1px;height:578px;background:#d9d9d9;"></div>
<div class="a" style="left:2075px;top:271px;width:1px;height:22px;background:#5a5a5a;"></div>
<div class="a" style="left:2075px;top:294px;width:1px;height:578px;background:#d9d9d9;"></div>
<div class="a" style="left:38px;top:316px;width:2081px;height:1px;background:#d9d9d9;"></div>
<div class="a" style="left:1px;top:316px;width:36px;height:1px;background:#5a5a5a;"></div>
<div class="a" style="left:38px;top:339px;width:2081px;height:1px;background:#d9d9d9;"></div>
<div class="a" style="left:1px;top:339px;width:36px;height:1px;background:#5a5a5a;"></div>
<div class="a" style="left:38px;top:362px;width:2081px;height:1px;background:#d9d9d9;"></div>
<div class="a" style="left:1px;top:362px;width:36px;height:1px;background:#5a5a5a;"></div>
<div class="a" style="left:38px;top:385px;width:2081px;height:1px;background:#d9d9d9;"></div>
<div class="a" style="left:1px;top:385px;width:36px;height:1px;background:#5a5a5a;"></div>
<div class="a" style="left:38px;top:408px;width:2081px;height:1px;background:#d9d9d9;"></div>
<div class="a" style="left:1px;top:408px;width:36px;height:1px;background:#5a5a5a;"></div>
<div class="a" style="left:38px;top:431px;width:2081px;height:1px;background:#d9d9d9;"></div>
<div class="a" style="left:1px;top:431px;width:36px;height:1px;background:#5a5a5a;"></div>
<div class="a" style="left:38px;top:454px;width:2081px;height:1px;background:#d9d9d9;"></div>
<div class="a" style="left:1px;top:454px;width:36px;height:1px;background:#5a5a5a;"></div>
<div class="a" style="left:38px;top:477px;width:2081px;height:1px;background:#d9d9d9;"></div>
<div class="a" style="left:1px;top:477px;width:36px;height:1px;background:#5a5a5a;"></div>
<div class="a" style="left:38px;top:500px;width:2081px;height:1px;background:#d9d9d9;"></div>
<div class="a" style="left:1px;top:500px;width:36px;height:1px;background:#5a5a5a;"></div>
<div class="a" style="left:38px;top:523px;width:2081px;height:1px;background:#d9d9d9;"></div>
<div class="a" style="left:1px;top:523px;width:36px;height:1px;background:#5a5a5a;"></div>
<div class="a" style="left:38px;top:546px;width:2081px;height:1px;background:#d9d9d9;"></div>
<div class="a" style="left:1px;top:546px;width:36px;height:1px;background:#5a5a5a;"></div>
<div class="a" style="left:38px;top:569px;width:2081px;height:1px;background:#d9d9d9;"></div>
<div class="a" style="left:1px;top:569px;width:36px;height:1px;background:#5a5a5a;"></div>
<div class="a" style="left:38px;top:592px;width:2081px;height:1px;background:#d9d9d9;"></div>
<div class="a" style="left:1px;top:592px;width:36px;height:1px;background:#5a5a5a;"></div>
<div class="a" style="left:38px;top:615px;width:2081px;height:1px;background:#d9d9d9;"></div>
<div class="a" style="left:1px;top:615px;width:36px;height:1px;background:#5a5a5a;"></div>
<div class="a" style="left:38px;top:638px;width:2081px;height:1px;background:#d9d9d9;"></div>
<div class="a" style="left:1px;top:638px;width:36px;height:1px;background:#5a5a5a;"></div>
<div class="a" style="left:38px;top:661px;width:2081px;height:1px;background:#d9d9d9;"></div>
<div class="a" style="left:1px;top:661px;width:36px;height:1px;background:#5a5a5a;"></div>
<div class="a" style="left:38px;top:684px;width:2081px;height:1px;background:#d9d9d9;"></div>
<div class="a" style="left:1px;top:684px;width:36px;height:1px;background:#5a5a5a;"></div>
<div class="a" style="left:38px;top:707px;width:2081px;height:1px;background:#d9d9d9;"></div>
<div class="a" style="left:1px;top:707px;width:36px;height:1px;background:#5a5a5a;"></div>
<div class="a" style="left:38px;top:730px;width:2081px;height:1px;background:#d9d9d9;"></div>
<div class="a" style="left:1px;top:730px;width:36px;height:1px;background:#5a5a5a;"></div>
<div class="a" style="left:38px;top:753px;width:2081px;height:1px;background:#d9d9d9;"></div>
<div class="a" style="left:1px;top:753px;width:36px;height:1px;background:#5a5a5a;"></div>
<div class="a" style="left:38px;top:776px;width:2081px;height:1px;background:#d9d9d9;"></div>
<div class="a" style="left:1px;top:776px;width:36px;height:1px;background:#5a5a5a;"></div>
<div class="a" style="left:38px;top:799px;width:2081px;height:1px;background:#d9d9d9;"></div>
<div class="a" style="left:1px;top:799px;width:36px;height:1px;background:#5a5a5a;"></div>
<div class="a" style="left:38px;top:822px;width:2081px;height:1px;background:#d9d9d9;"></div>
<div class="a" style="left:1px;top:822px;width:36px;height:1px;background:#5a5a5a;"></div>
<div class="a" style="left:38px;top:845px;width:2081px;height:1px;background:#d9d9d9;"></div>
<div class="a" style="left:1px;top:845px;width:36px;height:1px;background:#5a5a5a;"></div>
<div class="a" style="left:38px;top:868px;width:2081px;height:1px;background:#d9d9d9;"></div>
<div class="a" style="left:1px;top:868px;width:36px;height:1px;background:#5a5a5a;"></div>
<div class="a" style="left:1px;top:871px;width:36px;height:1px;background:#5a5a5a;"></div>
<svg class="a" style="left:19px;top:275px;" width="16" height="16" viewBox="0 0 16 16" fill="none"><path d="M15 0.5 V15 H0.5 Z" fill="#6a6a6a"/></svg>
<div class="a" style="left:2076px;top:272px;width:43px;height:21px;overflow:hidden;"><span class="t" style="left:37.5px;top:2px;font-size:18px;color:#e8e8e8">O</span></div>
<div class="a" style="left:541px;top:294px;width:97px;height:22px;overflow:hidden;"><span class="t" style="left:3px;top:3px;font-size:18px;color:#000">SubCategoryName</span></div>
<div class="a" style="left:2121px;top:272px;width:22px;height:603px;background:#1a1a1a;border-radius:11px;"></div>
<svg class="a" style="left:2127px;top:277px;" width="11" height="9" viewBox="0 0 11 9" fill="none"><path d="M5.5 0.5 L10.8 8.5 H0.2 Z" fill="#9a9a9a" stroke="#9a9a9a" stroke-width="0.8" stroke-linejoin="round"/></svg>
<div class="a" style="left:2127px;top:292px;width:11px;height:542px;background:#9b9b9b;border-radius:6px;"></div>
<svg class="a" style="left:2127px;top:860px;" width="11" height="9" viewBox="0 0 11 9" fill="none"><path d="M5.5 8.5 L10.8 0.5 H0.2 Z" fill="#9a9a9a" stroke="#9a9a9a" stroke-width="0.8" stroke-linejoin="round"/></svg>
<div class="a" style="left:142px;top:872px;width:72px;height:35px;background:#ffffff;border-radius:0 0 6px 6px;"></div>
<svg class="a" style="left:136px;top:872px;" width="6" height="6" viewBox="0 0 6 6" fill="none"><path d="M0 0 H6 V6 C6 2.5, 3.5 0, 0 0Z" fill="#ffffff"/></svg>
<svg class="a" style="left:214px;top:872px;" width="6" height="6" viewBox="0 0 6 6" fill="none"><path d="M6 0 H0 V6 C0 2.5, 2.5 0, 6 0Z" fill="#ffffff"/></svg>
<div class="a" style="left:152px;top:902px;width:52px;height:2px;background:#107c41;"></div>
<svg class="a" style="left:33px;top:885px;" width="9" height="13" viewBox="0 0 9 13" fill="none"><path d="M8 0.7 L1.5 6.5 L8 12.3" stroke="#8a8a8a" stroke-width="1.3"/></svg>
<svg class="a" style="left:73px;top:885px;" width="9" height="13" viewBox="0 0 9 13" fill="none"><path d="M1 0.7 L7.5 6.5 L1 12.3" stroke="#8a8a8a" stroke-width="1.3"/></svg>
<div class="a" style="left:219px;top:880px;width:1px;height:24px;background:#5a5a5a;"></div>
<svg class="a" style="left:271px;top:883px;" width="16" height="16" viewBox="0 0 16 16" fill="none"><path d="M8 0.5 V15.5 M0.5 8 H15.5" stroke="#e0e0e0" stroke-width="1.4"/></svg>
<svg class="a" style="left:1290px;top:886px;" width="4" height="14" viewBox="0 0 4 14" fill="none"><rect x="0" y="0" width="3.4" height="3" fill="#f0f0f0"/><rect x="0" y="5" width="3.4" height="3" fill="#f0f0f0"/><rect x="0" y="10" width="3.4" height="3" fill="#f0f0f0"/></svg>
<div class="a" style="left:1312px;top:881px;width:809px;height:21px;background:#171717;border-radius:10.5px;"></div>
<svg class="a" style="left:1318px;top:886px;" width="10" height="11" viewBox="0 0 10 11" fill="none"><path d="M0.5 5.5 L9.3 0.3 V10.7 Z" fill="#9a9a9a" stroke="#9a9a9a" stroke-width="0.6" stroke-linejoin="round"/></svg>
<div class="a" style="left:1333px;top:886px;width:640px;height:11px;background:#9b9b9b;border-radius:5.5px;"></div>
<svg class="a" style="left:2107px;top:886px;" width="10" height="11" viewBox="0 0 10 11" fill="none"><path d="M9.5 5.5 L0.7 0.3 V10.7 Z" fill="#9a9a9a" stroke="#9a9a9a" stroke-width="0.6" stroke-linejoin="round"/></svg>
<div class="a" style="left:1px;top:912px;width:2144px;height:27px;background:#141414;border-top:1px solid #3c3c3c;border-radius:0 0 7px 7px;box-sizing:border-box;"></div>
<svg class="a" style="left:76px;top:918px;" width="19" height="18" viewBox="0 0 19 18" fill="none"><path d="M16.5 8 V1 H1 V16.5 H6" stroke="#e8e8e8" stroke-width="1.5"/><path d="M1 3.5 H16.5" stroke="#e8e8e8" stroke-width="1.5"/><rect x="3.5" y="6" width="3" height="2" fill="#c8c8c8"/><rect x="3.5" y="10" width="3" height="2" fill="#c8c8c8"/><circle cx="12.5" cy="12" r="5" stroke="#e8e8e8" stroke-width="1.5" fill="#141414"/><circle cx="12.5" cy="12" r="2.2" fill="#f0f0f0"/></svg>
<svg class="a" style="left:115px;top:916px;" width="22" height="22" viewBox="0 0 22 22" fill="none"><g stroke-linecap="round" stroke-linejoin="round" fill="none">
<g stroke="#ececec" stroke-width="3.4"><circle cx="8" cy="3.6" r="1.9"/><path d="M2 7 C4 9.5, 12 9.5, 14.5 7 M8 9 V13.5 C8 15, 6 15, 6 17 V19.5 M10.5 12.5 V14"/></g>
<g stroke="#141414" stroke-width="1.1"><circle cx="8" cy="3.6" r="1.9"/><path d="M2 7 C4 9.5, 12 9.5, 14.5 7 M8 9 V13.5 C8 15, 6 15, 6 17 V19.5 M10.5 12.5 V14"/></g>
<path d="M9.5 17 L12.2 19.8 L18.5 13.2" stroke="#ececec" stroke-width="1.3"/></g></svg>
<div class="a" style="left:1759px;top:913px;width:50px;height:26px;background:#262626;"></div>
<svg class="a" style="left:1775px;top:917px;" width="18" height="18" viewBox="0 0 18 18" fill="none"><rect x="0.8" y="0.8" width="16" height="16" stroke="#e8e8e8" stroke-width="1.5"/><path d="M6.2 0.8 V17 M11.5 0.8 V17 M0.8 6.2 H17 M0.8 11.5 H17" stroke="#e8e8e8" stroke-width="1.5"/></svg>
<svg class="a" style="left:1825px;top:917px;" width="19" height="18" viewBox="0 0 19 18" fill="none"><rect x="0.8" y="0.8" width="17" height="16" stroke="#e8e8e8" stroke-width="1.5"/><rect x="4" y="3.5" width="10.5" height="10.5" stroke="#e8e8e8" stroke-width="1.2"/><path d="M6 7 H12.5 M6 9.5 H12.5 M6 12 H12.5" stroke="#c8c8c8" stroke-width="1"/></svg>
<svg class="a" style="left:1875px;top:917px;" width="19" height="18" viewBox="0 0 19 18" fill="none"><rect x="0.8" y="0.8" width="17" height="16" stroke="#e8e8e8" stroke-width="1.5"/><path d="M0.8 10 H12 V0.8 M6.5 0.8 V10" stroke="#e8e8e8" stroke-width="1.5"/></svg>
<div class="a" style="left:1916px;top:925px;width:10px;height:1.5px;background:#e0e0e0;"></div>
<div class="a" style="left:1932px;top:925.5px;width:125px;height:1px;background:#8a8a8a;"></div>
<div class="a" style="left:1992px;top:919px;width:6px;height:14px;background:#b0b0b0;"></div>
<svg class="a" style="left:2061px;top:920px;" width="12" height="12" viewBox="0 0 12 12" fill="none"><path d="M6 0 V12 M0 6 H12" stroke="#e0e0e0" stroke-width="1.4"/></svg>
<span class="t u" style="left:62.00px;top:26.00px;font-size:12.46px;color:#8a8a8a;transform:scaleX(0.9801);">AutoSave</span>
<span class="t u" style="left:153.00px;top:26.00px;font-size:12.46px;color:#6a6a6a;">Off</span>
<span class="t u" style="left:369.12px;top:25.00px;font-size:16.96px;color:#858585;transform:scaleX(0.8797);">Book1</span>
<span class="t u" style="left:421.00px;top:25.00px;font-size:16.96px;color:#858585;transform:scaleX(0.8000);">-</span>
<span class="t u" style="left:433.17px;top:25.00px;font-size:16.96px;color:#858585;transform:scaleX(0.8322);">Excel</span>
<span class="t u" style="left:502.11px;top:25.00px;font-size:16.96px;color:#858585;transform:scaleX(0.8934);">No Label</span>
<span class="t u" style="left:905.50px;top:22.00px;font-size:17.39px;color:#6e6e6e;transform:scaleX(0.9101);">Search</span>
<span class="t u" style="left:27.33px;top:73.00px;font-size:17.97px;color:#f0f0f0;transform:scaleX(0.8696);-webkit-text-stroke:0.2px #f0f0f0;">File</span>
<span class="t u" style="left:84.66px;top:73.00px;font-size:17.97px;color:#ffffff;font-weight:700;transform:scaleX(0.9449);-webkit-text-stroke:0.2px #ffffff;">Home</span>
<span class="t u" style="left:154.03px;top:73.00px;font-size:17.97px;color:#f0f0f0;transform:scaleX(0.9678);-webkit-text-stroke:0.2px #f0f0f0;">Insert</span>
<span class="t u" style="left:220.77px;top:73.00px;font-size:17.97px;color:#f0f0f0;transform:scaleX(0.9346);-webkit-text-stroke:0.2px #f0f0f0;">Page Layout</span>
<span class="t u" style="left:338.47px;top:73.00px;font-size:17.97px;color:#f0f0f0;transform:scaleX(0.9290);-webkit-text-stroke:0.2px #f0f0f0;">Formulas</span>
<span class="t u" style="left:431.35px;top:73.00px;font-size:17.97px;color:#f0f0f0;transform:scaleX(0.9475);-webkit-text-stroke:0.2px #f0f0f0;">Data</span>
<span class="t u" style="left:491.63px;top:73.00px;font-size:17.97px;color:#f0f0f0;transform:scaleX(0.8727);-webkit-text-stroke:0.2px #f0f0f0;">Review</span>
<span class="t u" style="left:569.00px;top:73.00px;font-size:17.97px;color:#f0f0f0;transform:scaleX(0.9010);-webkit-text-stroke:0.2px #f0f0f0;">View</span>
<span class="t u" style="left:629.20px;top:73.00px;font-size:17.97px;color:#f0f0f0;transform:scaleX(0.9823);-webkit-text-stroke:0.2px #f0f0f0;">Automate</span>
<span class="t u" style="left:727.04px;top:73.00px;font-size:17.97px;color:#f0f0f0;transform:scaleX(0.9572);-webkit-text-stroke:0.2px #f0f0f0;">Help</span>
<span class="t u" style="left:1940.00px;top:72.00px;font-size:17.39px;color:#f5f5f5;transform:scaleX(0.9844);-webkit-text-stroke:0.2px #f5f5f5;">Comments</span>
<span class="t u" style="left:2068.00px;top:72.00px;font-size:17.39px;color:#0a0a0a;transform:scaleX(0.8971);">Share</span>
<span class="t u" style="left:34.82px;top:154.00px;font-size:15.36px;color:#f2f2f2;transform:scaleX(0.8825);-webkit-text-stroke:0.2px #f2f2f2;">Paste</span>
<span class="t u" style="left:110.00px;top:112.00px;font-size:14.49px;color:#f2f2f2;transform:scaleX(0.9771);-webkit-text-stroke:0.2px #f2f2f2;">Cut</span>
<span class="t u" style="left:110.00px;top:144.00px;font-size:14.49px;color:#f2f2f2;transform:scaleX(0.9835);-webkit-text-stroke:0.2px #f2f2f2;">Copy</span>
<span class="t u" style="left:108.99px;top:176.00px;font-size:14.49px;color:#f2f2f2;transform:scaleX(1.0109);-webkit-text-stroke:0.2px #f2f2f2;">Format Painter</span>
<span class="t u" style="left:82.00px;top:204.00px;font-size:13.77px;color:#e8e8e8;-webkit-text-stroke:0.2px #e8e8e8;">Clipboard</span>
<span class="t u" style="left:240.50px;top:121.00px;font-size:15.65px;color:#f2f2f2;transform:scaleX(0.9574);-webkit-text-stroke:0.2px #f2f2f2;">Arial</span>
<span class="t u" style="left:386.04px;top:121.00px;font-size:15.65px;color:#f2f2f2;transform:scaleX(0.9631);-webkit-text-stroke:0.2px #f2f2f2;">11</span>
<span class="t u" style="left:453.00px;top:120.00px;font-size:17.39px;color:#c8c8c8;transform:scaleX(1.1667);">A</span>
<span class="t u" style="left:487.00px;top:122.00px;font-size:14.49px;color:#c8c8c8;transform:scaleX(1.2000);">A</span>
<span class="t u" style="left:246.17px;top:158.00px;font-size:18.12px;color:#c8c8c8;font-weight:700;transform:scaleX(0.8333);">B</span>
<span class="t u" style="left:280.00px;top:158.00px;font-size:18.12px;color:#c8c8c8;font-family:'Liberation Serif';transform:scaleX(1.3333);font-style:italic;">I</span>
<span class="t u" style="left:308.50px;top:158.00px;font-size:17.39px;color:#c8c8c8;">U</span>
<span class="t u" style="left:466.00px;top:157.00px;font-size:16.67px;color:#c8c8c8;transform:scaleX(1.5000);">A</span>
<span class="t u" style="left:349.06px;top:204.00px;font-size:13.77px;color:#e8e8e8;transform:scaleX(0.9356);-webkit-text-stroke:0.2px #e8e8e8;">Font</span>
<span class="t u" style="left:735.00px;top:121.00px;font-size:15.94px;color:#f2f2f2;transform:scaleX(0.9303);-webkit-text-stroke:0.2px #f2f2f2;">Wrap Text</span>
<span class="t u" style="left:734.06px;top:161.00px;font-size:15.94px;color:#f2f2f2;transform:scaleX(0.9448);-webkit-text-stroke:0.2px #f2f2f2;">Merge &amp; Center</span>
<span class="t u" style="left:666.00px;top:204.00px;font-size:13.77px;color:#e8e8e8;transform:scaleX(0.9448);-webkit-text-stroke:0.2px #e8e8e8;">Alignment</span>
<span class="t u" style="left:905.00px;top:121.00px;font-size:15.65px;color:#f2f2f2;transform:scaleX(0.9063);-webkit-text-stroke:0.2px #f2f2f2;">General</span>
<span class="t u" style="left:1039.50px;top:157.00px;font-size:12.61px;color:#c8c8c8;transform:scaleX(0.6429);">0</span>
<span class="t u" style="left:1027.03px;top:167.00px;font-size:12.61px;color:#c8c8c8;transform:scaleX(0.9688);">.00</span>
<span class="t u" style="left:1059.56px;top:157.00px;font-size:12.61px;color:#c8c8c8;transform:scaleX(0.9385);">.00</span>
<span class="t u" style="left:1064.95px;top:167.00px;font-size:12.61px;color:#c8c8c8;transform:scaleX(1.0523);">.0</span>
<span class="t u" style="left:956.01px;top:204.00px;font-size:13.77px;color:#e8e8e8;transform:scaleX(0.9922);-webkit-text-stroke:0.2px #e8e8e8;">Number</span>
<span class="t u" style="left:1109.00px;top:152.00px;font-size:15.22px;color:#f2f2f2;transform:scaleX(1.0163);-webkit-text-stroke:0.2px #f2f2f2;">Conditional</span>
<span class="t u" style="left:1102.98px;top:171.00px;font-size:15.22px;color:#f2f2f2;transform:scaleX(1.0243);-webkit-text-stroke:0.2px #f2f2f2;">Formatting</span>
<span class="t u" style="left:1197.04px;top:152.00px;font-size:15.22px;color:#f2f2f2;transform:scaleX(0.9574);-webkit-text-stroke:0.2px #f2f2f2;">Format as</span>
<span class="t u" style="left:1206.00px;top:171.00px;font-size:15.22px;color:#f2f2f2;transform:scaleX(0.9744);-webkit-text-stroke:0.2px #f2f2f2;">Table</span>
<span class="t u" style="left:1284.00px;top:152.00px;font-size:15.22px;color:#f2f2f2;transform:scaleX(0.9290);-webkit-text-stroke:0.2px #f2f2f2;">Cell</span>
<span class="t u" style="left:1270.00px;top:171.00px;font-size:15.22px;color:#f2f2f2;transform:scaleX(0.9084);-webkit-text-stroke:0.2px #f2f2f2;">Styles</span>
<span class="t u" style="left:1196.00px;top:205.00px;font-size:13.77px;color:#e8e8e8;transform:scaleX(0.8776);-webkit-text-stroke:0.2px #e8e8e8;">Styles</span>
<span class="t u" style="left:1352.56px;top:153.00px;font-size:15.22px;color:#f2f2f2;transform:scaleX(0.9383);-webkit-text-stroke:0.2px #f2f2f2;">Insert</span>
<span class="t u" style="left:1401.97px;top:153.00px;font-size:15.22px;color:#f2f2f2;transform:scaleX(1.0346);-webkit-text-stroke:0.2px #f2f2f2;">Delete</span>
<span class="t u" style="left:1454.02px;top:152.00px;font-size:15.22px;color:#f2f2f2;transform:scaleX(0.9798);-webkit-text-stroke:0.2px #f2f2f2;">Format</span>
<span class="t u" style="left:1411.00px;top:204.00px;font-size:13.77px;color:#e8e8e8;transform:scaleX(0.8791);-webkit-text-stroke:0.2px #e8e8e8;">Cells</span>
<span class="t u" style="left:1555.00px;top:111.00px;font-size:15.22px;color:#f2f2f2;transform:scaleX(0.9851);-webkit-text-stroke:0.2px #f2f2f2;">AutoSum</span>
<span class="t u" style="left:1553.95px;top:143.00px;font-size:15.22px;color:#f2f2f2;transform:scaleX(1.0521);-webkit-text-stroke:0.2px #f2f2f2;">Fill</span>
<span class="t u" style="left:1555.00px;top:175.00px;font-size:15.22px;color:#f2f2f2;transform:scaleX(0.9367);-webkit-text-stroke:0.2px #f2f2f2;">Clear</span>
<span class="t u" style="left:1667.00px;top:108.00px;font-size:21.74px;color:#4ba0e6;transform:scaleX(0.9000);-webkit-text-stroke:0.2px #4ba0e6;">A</span>
<span class="t u" style="left:1667.00px;top:127.00px;font-size:20.29px;color:#c8c8c8;transform:scaleX(1.0417);">Z</span>
<span class="t u" style="left:1663.00px;top:152.00px;font-size:15.22px;color:#f2f2f2;transform:scaleX(1.0204);-webkit-text-stroke:0.2px #f2f2f2;">Sort &amp;</span>
<span class="t u" style="left:1659.99px;top:171.00px;font-size:15.22px;color:#f2f2f2;transform:scaleX(1.0076);-webkit-text-stroke:0.2px #f2f2f2;">Filter</span>
<span class="t u" style="left:1718.97px;top:152.00px;font-size:15.22px;color:#f2f2f2;transform:scaleX(1.0272);-webkit-text-stroke:0.2px #f2f2f2;">Find &amp;</span>
<span class="t u" style="left:1715.00px;top:171.00px;font-size:15.22px;color:#f2f2f2;transform:scaleX(0.9287);-webkit-text-stroke:0.2px #f2f2f2;">Select</span>
<span class="t u" style="left:1627.01px;top:205.00px;font-size:13.77px;color:#e8e8e8;transform:scaleX(0.9893);-webkit-text-stroke:0.2px #e8e8e8;">Editing</span>
<span class="t u" style="left:1794.00px;top:152.00px;font-size:15.22px;color:#f2f2f2;transform:scaleX(0.9579);-webkit-text-stroke:0.2px #f2f2f2;">Sensitivity</span>
<span class="t u" style="left:1799.00px;top:205.00px;font-size:13.77px;color:#e8e8e8;transform:scaleX(0.9020);-webkit-text-stroke:0.2px #e8e8e8;">Sensitivity</span>
<span class="t u" style="left:1885.00px;top:152.00px;font-size:15.22px;color:#f2f2f2;-webkit-text-stroke:0.2px #f2f2f2;">Add-ins</span>
<span class="t u" style="left:1888.00px;top:205.00px;font-size:13.77px;color:#e8e8e8;transform:scaleX(0.9617);-webkit-text-stroke:0.2px #e8e8e8;">Add-ins</span>
<span class="t u" style="left:1962.00px;top:152.00px;font-size:15.22px;color:#f2f2f2;transform:scaleX(0.9687);-webkit-text-stroke:0.2px #f2f2f2;">Analyze</span>
<span class="t u" style="left:1972.05px;top:171.00px;font-size:15.22px;color:#f2f2f2;transform:scaleX(0.9469);-webkit-text-stroke:0.2px #f2f2f2;">Data</span>
<span class="t u" style="left:17.52px;top:239.00px;font-size:18.55px;color:#f5f5f5;transform:scaleX(0.9821);-webkit-text-stroke:0.2px #f5f5f5;">M2</span>
<span class="t" style="left:98.50px;top:274.00px;font-size:18px;color:#f2f2f2;-webkit-text-stroke:0.25px #f2f2f2;">A</span>
<span class="t" style="left:209.00px;top:274.00px;font-size:18px;color:#f2f2f2;-webkit-text-stroke:0.25px #f2f2f2;">B</span>
<span class="t" style="left:315.00px;top:274.00px;font-size:18px;color:#f2f2f2;-webkit-text-stroke:0.25px #f2f2f2;">C</span>
<span class="t" style="left:455.00px;top:274.00px;font-size:18px;color:#f2f2f2;-webkit-text-stroke:0.25px #f2f2f2;">D</span>
<span class="t" style="left:583.00px;top:274.00px;font-size:18px;color:#f2f2f2;-webkit-text-stroke:0.25px #f2f2f2;">E</span>
<span class="t" style="left:720.00px;top:274.00px;font-size:18px;color:#f2f2f2;-webkit-text-stroke:0.25px #f2f2f2;">F</span>
<span class="t" style="left:894.00px;top:274.00px;font-size:18px;color:#f2f2f2;-webkit-text-stroke:0.25px #f2f2f2;">G</span>
<span class="t" style="left:1052.00px;top:274.00px;font-size:18px;color:#f2f2f2;-webkit-text-stroke:0.25px #f2f2f2;">H</span>
<span class="t" style="left:1229.00px;top:274.00px;font-size:18px;color:#f2f2f2;-webkit-text-stroke:0.25px #f2f2f2;">I</span>
<span class="t" style="left:1406.00px;top:274.00px;font-size:18px;color:#f2f2f2;-webkit-text-stroke:0.25px #f2f2f2;">J</span>
<span class="t" style="left:1567.00px;top:274.00px;font-size:18px;color:#f2f2f2;-webkit-text-stroke:0.25px #f2f2f2;">K</span>
<span class="t" style="left:1734.50px;top:274.00px;font-size:18px;color:#f2f2f2;-webkit-text-stroke:0.25px #f2f2f2;">L</span>
<span class="t" style="left:1863.50px;top:274.00px;font-size:18px;color:#f2f2f2;-webkit-text-stroke:0.25px #f2f2f2;">M</span>
<span class="t" style="left:1992.50px;top:274.00px;font-size:18px;color:#f2f2f2;-webkit-text-stroke:0.25px #f2f2f2;">N</span>
<span class="t" style="left:14.00px;top:297.00px;font-size:18px;color:#f2f2f2;-webkit-text-stroke:0.25px #f2f2f2;">1</span>
<span class="t" style="left:14.50px;top:320.00px;font-size:18px;color:#f2f2f2;-webkit-text-stroke:0.25px #f2f2f2;">2</span>
<span class="t" style="left:14.50px;top:343.00px;font-size:18px;color:#f2f2f2;-webkit-text-stroke:0.25px #f2f2f2;">3</span>
<span class="t" style="left:14.50px;top:366.00px;font-size:18px;color:#f2f2f2;-webkit-text-stroke:0.25px #f2f2f2;">4</span>
<span class="t" style="left:14.50px;top:389.00px;font-size:18px;color:#f2f2f2;-webkit-text-stroke:0.25px #f2f2f2;">5</span>
<span class="t" style="left:14.50px;top:412.00px;font-size:18px;color:#f2f2f2;-webkit-text-stroke:0.25px #f2f2f2;">6</span>
<span class="t" style="left:14.50px;top:435.00px;font-size:18px;color:#f2f2f2;-webkit-text-stroke:0.25px #f2f2f2;">7</span>
<span class="t" style="left:14.50px;top:458.00px;font-size:18px;color:#f2f2f2;-webkit-text-stroke:0.25px #f2f2f2;">8</span>
<span class="t" style="left:14.50px;top:481.00px;font-size:18px;color:#f2f2f2;-webkit-text-stroke:0.25px #f2f2f2;">9</span>
<span class="t" style="left:8.99px;top:504.00px;font-size:18px;color:#f2f2f2;-webkit-text-stroke:0.25px #f2f2f2;">10</span>
<span class="t" style="left:9.66px;top:527.00px;font-size:18px;color:#f2f2f2;-webkit-text-stroke:0.25px #f2f2f2;">11</span>
<span class="t" style="left:8.99px;top:550.00px;font-size:18px;color:#f2f2f2;-webkit-text-stroke:0.25px #f2f2f2;">12</span>
<span class="t" style="left:8.99px;top:573.00px;font-size:18px;color:#f2f2f2;-webkit-text-stroke:0.25px #f2f2f2;">13</span>
<span class="t" style="left:8.99px;top:596.00px;font-size:18px;color:#f2f2f2;-webkit-text-stroke:0.25px #f2f2f2;">14</span>
<span class="t" style="left:8.99px;top:619.00px;font-size:18px;color:#f2f2f2;-webkit-text-stroke:0.25px #f2f2f2;">15</span>
<span class="t" style="left:8.99px;top:642.00px;font-size:18px;color:#f2f2f2;-webkit-text-stroke:0.25px #f2f2f2;">16</span>
<span class="t" style="left:8.99px;top:665.00px;font-size:18px;color:#f2f2f2;-webkit-text-stroke:0.25px #f2f2f2;">17</span>
<span class="t" style="left:8.99px;top:688.00px;font-size:18px;color:#f2f2f2;-webkit-text-stroke:0.25px #f2f2f2;">18</span>
<span class="t" style="left:8.99px;top:711.00px;font-size:18px;color:#f2f2f2;-webkit-text-stroke:0.25px #f2f2f2;">19</span>
<span class="t" style="left:9.49px;top:734.00px;font-size:18px;color:#f2f2f2;-webkit-text-stroke:0.25px #f2f2f2;">20</span>
<span class="t" style="left:9.49px;top:757.00px;font-size:18px;color:#f2f2f2;-webkit-text-stroke:0.25px #f2f2f2;">21</span>
<span class="t" style="left:9.49px;top:780.00px;font-size:18px;color:#f2f2f2;-webkit-text-stroke:0.25px #f2f2f2;">22</span>
<span class="t" style="left:9.49px;top:803.00px;font-size:18px;color:#f2f2f2;-webkit-text-stroke:0.25px #f2f2f2;">23</span>
<span class="t" style="left:9.49px;top:826.00px;font-size:18px;color:#f2f2f2;-webkit-text-stroke:0.25px #f2f2f2;">24</span>
<span class="t" style="left:9.49px;top:849.00px;font-size:18px;color:#f2f2f2;-webkit-text-stroke:0.25px #f2f2f2;">25</span>
<span class="t" style="left:41.00px;top:297.00px;font-size:18px;color:#000000;">Company Code</span>
<span class="t" style="left:175.00px;top:297.00px;font-size:18px;color:#000000;">Area Code</span>
<span class="t" style="left:263.00px;top:297.00px;font-size:18px;color:#000000;">SiteCode</span>
<span class="t" style="left:387.00px;top:297.00px;font-size:18px;color:#000000;">SalesAreaCode</span>
<span class="t" style="left:642.00px;top:297.00px;font-size:18px;color:#000000;">Company Name</span>
<span class="t" style="left:817.00px;top:297.00px;font-size:18px;color:#000000;">Area Name</span>
<span class="t" style="left:991.00px;top:297.00px;font-size:18px;color:#000000;">Site Ref</span>
<span class="t" style="left:1133.00px;top:297.00px;font-size:18px;color:#000000;">Site Name</span>
<span class="t" style="left:1337.00px;top:297.00px;font-size:18px;color:#000000;">Sales Area Name</span>
<span class="t" style="left:1490.00px;top:297.00px;font-size:18px;color:#000000;">Sub-Category Name</span>
<span class="t" style="left:1664.00px;top:297.00px;font-size:18px;color:#000000;">CurrentBand</span>
<span class="t" style="left:1823.00px;top:297.00px;font-size:18px;color:#000000;">FutureBand</span>
<span class="t" style="left:1926.00px;top:297.00px;font-size:18px;color:#000000;">DateOfChangeStr</span>
<span class="t" style="left:157.99px;top:320.00px;font-size:18px;color:#000000;">1</span>
<span class="t" style="left:245.99px;top:320.00px;font-size:18px;color:#000000;">1</span>
<span class="t" style="left:369.99px;top:320.00px;font-size:18px;color:#000000;">2</span>
<span class="t" style="left:526.99px;top:320.00px;font-size:18px;color:#000000;">1</span>
<span class="t" style="left:614.98px;top:320.00px;font-size:18px;color:#000000;">26</span>
<span class="t" style="left:642.00px;top:320.00px;font-size:18px;color:#000000;">Nesting Group 1</span>
<span class="t" style="left:817.00px;top:320.00px;font-size:18px;color:#000000;">Area 1</span>
<span class="t" style="left:991.00px;top:320.00px;font-size:18px;color:#000000;">S1</span>
<span class="t" style="left:1133.00px;top:320.00px;font-size:18px;color:#000000;">Edinburgh City</span>
<span class="t" style="left:1337.00px;top:320.00px;font-size:18px;color:#000000;">Castle View Room</span>
<span class="t" style="left:1490.00px;top:320.00px;font-size:18px;color:#000000;">Bottled Beer / Ale</span>
<span class="t" style="left:1664.00px;top:320.00px;font-size:18px;color:#000000;">A Standard Pricing</span>
<span class="t" style="left:157.99px;top:343.00px;font-size:18px;color:#000000;">1</span>
<span class="t" style="left:245.99px;top:343.00px;font-size:18px;color:#000000;">1</span>
<span class="t" style="left:369.99px;top:343.00px;font-size:18px;color:#000000;">2</span>
<span class="t" style="left:526.99px;top:343.00px;font-size:18px;color:#000000;">1</span>
<span class="t" style="left:614.98px;top:343.00px;font-size:18px;color:#000000;">25</span>
<span class="t" style="left:642.00px;top:343.00px;font-size:18px;color:#000000;">Nesting Group 1</span>
<span class="t" style="left:817.00px;top:343.00px;font-size:18px;color:#000000;">Area 1</span>
<span class="t" style="left:991.00px;top:343.00px;font-size:18px;color:#000000;">S1</span>
<span class="t" style="left:1133.00px;top:343.00px;font-size:18px;color:#000000;">Edinburgh City</span>
<span class="t" style="left:1337.00px;top:343.00px;font-size:18px;color:#000000;">Castle View Room</span>
<span class="t" style="left:1490.00px;top:343.00px;font-size:18px;color:#000000;">Bottled Cider</span>
<span class="t" style="left:1664.00px;top:343.00px;font-size:18px;color:#000000;">A Standard Pricing</span>
<span class="t" style="left:157.99px;top:366.00px;font-size:18px;color:#000000;">1</span>
<span class="t" style="left:245.99px;top:366.00px;font-size:18px;color:#000000;">1</span>
<span class="t" style="left:369.99px;top:366.00px;font-size:18px;color:#000000;">2</span>
<span class="t" style="left:526.99px;top:366.00px;font-size:18px;color:#000000;">1</span>
<span class="t" style="left:614.98px;top:366.00px;font-size:18px;color:#000000;">24</span>
<span class="t" style="left:642.00px;top:366.00px;font-size:18px;color:#000000;">Nesting Group 1</span>
<span class="t" style="left:817.00px;top:366.00px;font-size:18px;color:#000000;">Area 1</span>
<span class="t" style="left:991.00px;top:366.00px;font-size:18px;color:#000000;">S1</span>
<span class="t" style="left:1133.00px;top:366.00px;font-size:18px;color:#000000;">Edinburgh City</span>
<span class="t" style="left:1337.00px;top:366.00px;font-size:18px;color:#000000;">Castle View Room</span>
<span class="t" style="left:1490.00px;top:366.00px;font-size:18px;color:#000000;">Bottled Lager</span>
<span class="t" style="left:1664.00px;top:366.00px;font-size:18px;color:#000000;">A Standard Pricing</span>
<span class="t" style="left:157.99px;top:389.00px;font-size:18px;color:#000000;">1</span>
<span class="t" style="left:245.99px;top:389.00px;font-size:18px;color:#000000;">1</span>
<span class="t" style="left:369.99px;top:389.00px;font-size:18px;color:#000000;">2</span>
<span class="t" style="left:526.99px;top:389.00px;font-size:18px;color:#000000;">2</span>
<span class="t" style="left:614.98px;top:389.00px;font-size:18px;color:#000000;">26</span>
<span class="t" style="left:642.00px;top:389.00px;font-size:18px;color:#000000;">Nesting Group 1</span>
<span class="t" style="left:817.00px;top:389.00px;font-size:18px;color:#000000;">Area 1</span>
<span class="t" style="left:991.00px;top:389.00px;font-size:18px;color:#000000;">S1</span>
<span class="t" style="left:1133.00px;top:389.00px;font-size:18px;color:#000000;">Edinburgh City</span>
<span class="t" style="left:1337.00px;top:389.00px;font-size:18px;color:#000000;">Restaurant &amp; Bar</span>
<span class="t" style="left:1490.00px;top:389.00px;font-size:18px;color:#000000;">Bottled Beer / Ale</span>
<span class="t" style="left:1664.00px;top:389.00px;font-size:18px;color:#000000;">A Standard Pricing</span>
<span class="t" style="left:157.99px;top:412.00px;font-size:18px;color:#000000;">1</span>
<span class="t" style="left:245.99px;top:412.00px;font-size:18px;color:#000000;">1</span>
<span class="t" style="left:369.99px;top:412.00px;font-size:18px;color:#000000;">2</span>
<span class="t" style="left:526.99px;top:412.00px;font-size:18px;color:#000000;">2</span>
<span class="t" style="left:614.98px;top:412.00px;font-size:18px;color:#000000;">25</span>
<span class="t" style="left:642.00px;top:412.00px;font-size:18px;color:#000000;">Nesting Group 1</span>
<span class="t" style="left:817.00px;top:412.00px;font-size:18px;color:#000000;">Area 1</span>
<span class="t" style="left:991.00px;top:412.00px;font-size:18px;color:#000000;">S1</span>
<span class="t" style="left:1133.00px;top:412.00px;font-size:18px;color:#000000;">Edinburgh City</span>
<span class="t" style="left:1337.00px;top:412.00px;font-size:18px;color:#000000;">Restaurant &amp; Bar</span>
<span class="t" style="left:1490.00px;top:412.00px;font-size:18px;color:#000000;">Bottled Cider</span>
<span class="t" style="left:1664.00px;top:412.00px;font-size:18px;color:#000000;">A Standard Pricing</span>
<span class="t" style="left:157.99px;top:435.00px;font-size:18px;color:#000000;">1</span>
<span class="t" style="left:245.99px;top:435.00px;font-size:18px;color:#000000;">1</span>
<span class="t" style="left:369.99px;top:435.00px;font-size:18px;color:#000000;">2</span>
<span class="t" style="left:526.99px;top:435.00px;font-size:18px;color:#000000;">2</span>
<span class="t" style="left:614.98px;top:435.00px;font-size:18px;color:#000000;">24</span>
<span class="t" style="left:642.00px;top:435.00px;font-size:18px;color:#000000;">Nesting Group 1</span>
<span class="t" style="left:817.00px;top:435.00px;font-size:18px;color:#000000;">Area 1</span>
<span class="t" style="left:991.00px;top:435.00px;font-size:18px;color:#000000;">S1</span>
<span class="t" style="left:1133.00px;top:435.00px;font-size:18px;color:#000000;">Edinburgh City</span>
<span class="t" style="left:1337.00px;top:435.00px;font-size:18px;color:#000000;">Restaurant &amp; Bar</span>
<span class="t" style="left:1490.00px;top:435.00px;font-size:18px;color:#000000;">Bottled Lager</span>
<span class="t" style="left:1664.00px;top:435.00px;font-size:18px;color:#000000;">A Standard Pricing</span>
<span class="t u" style="left:152.50px;top:881.00px;font-size:17.83px;color:#262626;transform:scaleX(0.9012);-webkit-text-stroke:0.3px #262626;">Sheet1</span>
<span class="t u" style="left:14.64px;top:921.00px;font-size:12.9px;color:#f2f2f2;transform:scaleX(0.9615);-webkit-text-stroke:0.2px #f2f2f2;">Ready</span>
<span class="t u" style="left:138.00px;top:921.00px;font-size:12.9px;color:#f0f0f0;transform:scaleX(1.0214);-webkit-text-stroke:0.2px #f0f0f0;">Accessibility: Good to go</span>
<span class="t u" style="left:2089.00px;top:921.00px;font-size:12.9px;color:#f0f0f0;transform:scaleX(0.9536);-webkit-text-stroke:0.2px #f0f0f0;">100%</span>
</body></html>
